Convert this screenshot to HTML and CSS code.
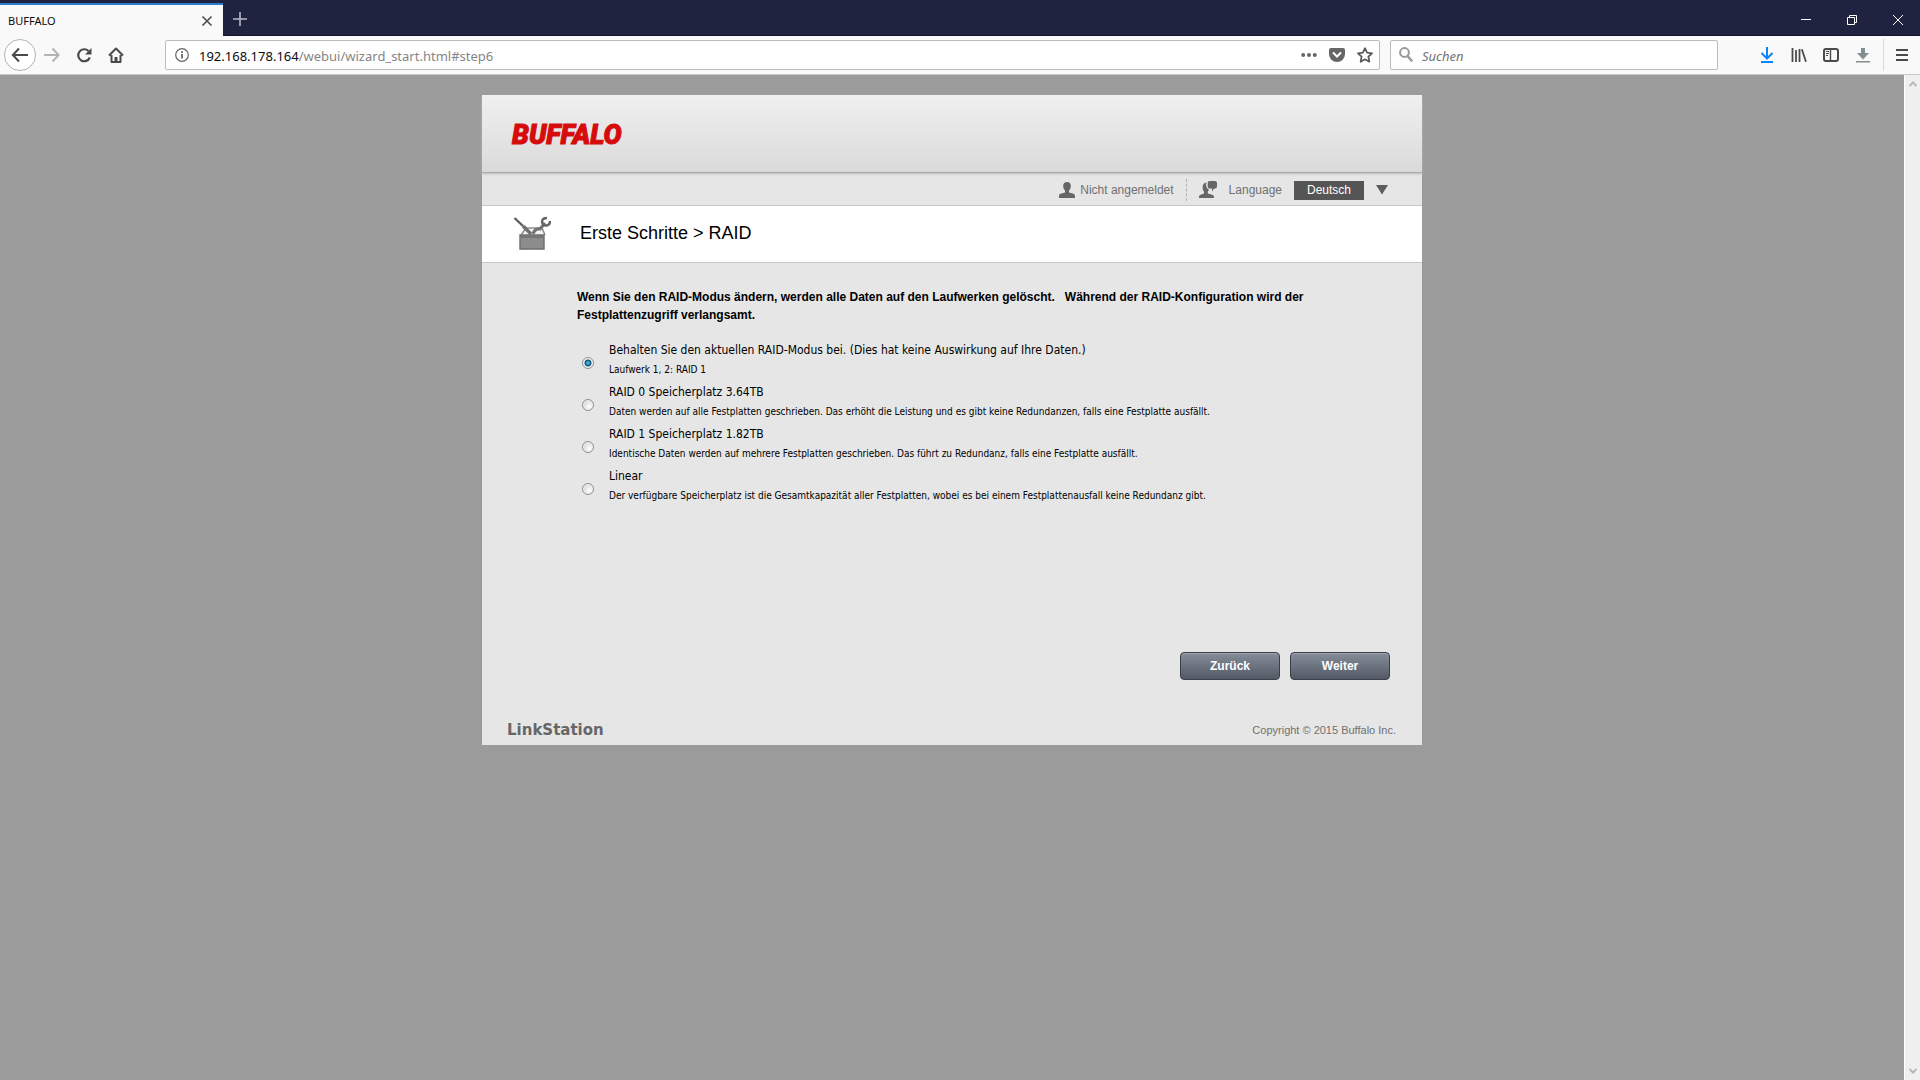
FILE: index.html
```html
<!DOCTYPE html>
<html lang="de">
<head>
<meta charset="utf-8">
<title>BUFFALO</title>
<link rel="stylesheet" href="styles.css">
</head>
<body>
<header class="browser">
  <div class="tabs">
    <div class="tab">
      <span>BUFFALO</span>
      <button class="icon-button" aria-label="Tab schließen"><svg width="12" height="12" viewBox="0 0 12 12" fill="none" stroke="#4c4c4c" stroke-width="1.6"><path d="M1.5 1.5l9 9M10.500 1.500l-9 9"/></svg></button>
    </div>
    <button class="icon-button new-tab" aria-label="Neuer Tab"><svg width="14" height="14" viewBox="0 0 14 14" fill="none" stroke="#b9bac4" stroke-width="1.600"><path d="M7 0v14M0 7h14"/></svg></button>
    <div class="window-buttons">
      <button class="icon-button" aria-label="Minimieren"><svg width="10" height="10" viewBox="0 0 10 10" stroke="#fff"><path d="M0 4.500h10"/></svg></button>
      <button class="icon-button" aria-label="Wiederherstellen"><svg width="10" height="10" viewBox="0 0 10 10" fill="none" stroke="#fff"><path d="M.5 2.500h7v7h-7zM2.500 2.500v-2h7v7h-2"/></svg></button>
      <button class="icon-button" aria-label="Schließen"><svg width="10" height="10" viewBox="0 0 10 10" fill="none" stroke="#fff"><path d="M0 0l10 10M10 0L0 10"/></svg></button>
    </div>
  </div>
  <div class="toolbar">
    <nav class="nav-buttons">
      <button class="icon-button back" aria-label="Zurück"><svg width="18" height="16" viewBox="0 0 18 16" fill="none" stroke="#4a4a4a" stroke-width="2"><path d="M17 8H2M8 1.500L1.800 8 8 14.500"/></svg></button>
      <button class="icon-button" aria-label="Vor"><svg width="16" height="16" viewBox="0 0 16 16" fill="none" stroke="#b4b4b4" stroke-width="2"><path d="M0 8h14M8.500 1.500L14.700 8 8.500 14.500"/></svg></button>
      <button class="icon-button" aria-label="Neu laden"><svg width="16" height="16" viewBox="0 0 16 16" fill="none" stroke="#4a4a4a" stroke-width="2.200"><path d="M13.800 10.500A6 6 0 1 1 12.500 4"/><path d="M15.500 1v6.500H9z" fill="#4a4a4a" stroke="none"/></svg></button>
      <button class="icon-button" aria-label="Startseite"><svg width="16" height="16" viewBox="0 0 16 16" fill="none" stroke="#4a4a4a" stroke-width="2" stroke-linejoin="round"><path d="M1 8.500L8 1.500l7 7M3.500 8v7h9V8"/><path d="M6.500 15v-5h3v5z" fill="#4a4a4a" stroke="none"/></svg></button>
    </nav>
    <div class="address field">
      <svg width="14" height="14" viewBox="0 0 14 14" fill="none" stroke="#666" stroke-width="1.200"><circle cx="7" cy="7" r="6.300"/><path d="M7 6v4.500M7 3.200v1.700" stroke-width="1.800"/></svg>
      <a class="url" href="#step6"><span>192.168.178.164</span>/webui/wizard_start.html#step6</a>
      <button class="icon-button" aria-label="Aktionen"><svg width="16" height="6" viewBox="0 0 16 6" fill="#666"><circle cx="2.200" cy="3" r="2"/><circle cx="8" cy="3" r="2"/><circle cx="13.800" cy="3" r="2"/></svg></button>
      <button class="icon-button" aria-label="Pocket"><svg width="16" height="16" viewBox="0 0 16 16"><path d="M2 1h12q2 0 2 2v4a8 8 0 0 1-16 0V3q0-2 2-2z" fill="#666"/><path d="M4.500 6L8 9.500 11.500 6" fill="none" stroke="#fff" stroke-width="2" stroke-linecap="round"/></svg></button>
      <button class="icon-button" aria-label="Lesezeichen"><svg width="16" height="16" viewBox="0 0 16 16" fill="none" stroke="#5a5a5a" stroke-width="1.800" stroke-linejoin="round"><path d="M8 1.200l2.100 4.500 4.900.6-3.600 3.400.9 5L8 12.300l-4.300 2.400.9-5L1 6.300l4.900-.6z"/></svg></button>
    </div>
    <label class="search field">
      <svg width="14" height="16" viewBox="0 0 14 16" fill="none" stroke="#999" stroke-width="2"><circle cx="5.500" cy="5.500" r="4.400"/><path d="M8.500 9l4.700 5.500" stroke-width="2.400"/></svg>
      <input type="text" placeholder="Suchen" aria-label="Suchen">
    </label>
    <div class="tools">
      <button class="icon-button" aria-label="Downloads"><svg width="14" height="16" viewBox="0 0 14 16" fill="none" stroke="#0a84ff" stroke-width="2"><path d="M7 0v11M1.500 6L7 11.500 12.500 6M1 15h12"/></svg></button>
      <button class="icon-button" aria-label="Bibliothek"><svg width="16" height="16" viewBox="0 0 16 16" fill="none" stroke="#4a4a4a" stroke-width="1.800"><path d="M1.500 1v14M5 3v12M8.500 2v13M10.800 2.200l4.200 12.600"/></svg></button>
      <button class="icon-button" aria-label="Seitenleiste"><svg width="16" height="14" viewBox="0 0 16 14" fill="none" stroke="#4a4a4a"><rect x="1" y="1" width="14" height="12" rx="2" stroke-width="2"/><path d="M7.500 1v12" stroke-width="1.400"/><path d="M3 3.500h3M3 5.500h3M3 7.500h2"/></svg></button>
      <button class="icon-button" aria-label="Herunterladen"><svg width="14" height="16" viewBox="0 0 14 16" fill="#849090"><path d="M5 1h4v5h4l-6 6.500L1 6h4zM0 14h14v1.500H0z"/></svg></button>
    </div>
    <div class="menu">
      <button class="icon-button" aria-label="Menü"><svg width="12" height="14" viewBox="0 0 12 14" fill="#4a4a4a"><path d="M0 1h12v2H0zM0 6h12v2H0zM0 11h12v2H0z"/></svg></button>
    </div>
  </div>
</header>
<div class="viewport">
  <div class="page">
    <div class="card">
      <header class="brand"><span class="logo">BUFFALO</span></header>
      <div class="userbar">
        <span class="user"><svg width="16" height="16" viewBox="0 0 16 16" fill="#666"><path d="M8 0c2.700 0 4 1.800 3.800 4.200C11.700 6.300 11 7.500 10 8.600v1.900l4.500 1.300Q16 12.300 16 14v2H0v-2q0-1.700 1.500-2.200L6 10.500V8.600C5 7.500 4.300 6.300 4.200 4.200 4 1.800 5.300 0 8 0z"/></svg>Nicht angemeldet</span>
        <label class="language"><svg width="18" height="18" viewBox="0 0 18 18" fill="#666"><path d="M10.500 0H16q2 0 2 2v3.500q0 2-2 2h-.8L13 10.500V7.500h-2.500q-1.800 0-1.800-2V2q0-2 1.800-2z"/><path d="M7.500 1.500Q6.900 3 7.200 5q.2 2.400 2.600 3.500-.2 1.500-1 2.200v1.800l4.500 1.200q1.700.6 1.700 2.300v1H0v-1q0-1.700 1.500-2.300L5 12.500v-1.800Q3.600 9 3.600 6.200q0-4 3.900-4.700z"/></svg><span>Language</span>
          <select class="language-select"><option>Deutsch</option></select>
          <svg width="12" height="10" viewBox="0 0 12 10" fill="#5c5c5c"><path d="M0 0h12L6 9.500z"/></svg></label>
      </div>
      <div class="title">
        <svg width="38" height="34" viewBox="0 0 38 34"><path d="M8 19l5-7h16l3 7" fill="#f4f4f4" stroke="#8c8c8c" stroke-width="1.500"/><path d="M1.500 2L10 10" stroke="#5e5e5e" stroke-width="2.400"/><path d="M10 10l8 8" stroke="#707070" stroke-width="3.400"/><path d="M20 18q2-6 7-5l5-6" fill="none" stroke="#747474" stroke-width="3.200"/><path d="M34 2q-5 0-5 4 1 4 4.500 3.500Q37 9 37 5" fill="none" stroke="#666" stroke-width="2.400"/><path d="M7 19h24v14H7z" fill="#8c8c8c" stroke="#6c6c6c" stroke-width="1.400"/><path d="M8 20h22v2H8z" fill="#757575"/></svg>
        <h1>Erste Schritte &gt; RAID</h1>
      </div>
      <main class="content">
        <p class="warning">Wenn Sie den RAID-Modus ändern, werden alle Daten auf den Laufwerken gelöscht. &nbsp; Während der RAID-Konfiguration wird der Festplattenzugriff verlangsamt.</p>
        <form class="options">
          <div class="option"><input type="radio" name="raid" id="keep" checked><label for="keep">Behalten Sie den aktuellen RAID-Modus bei. (Dies hat keine Auswirkung auf Ihre Daten.)<small>Laufwerk 1, 2: RAID 1</small></label></div>
          <div class="option"><input type="radio" name="raid" id="raid0"><label for="raid0">RAID 0 Speicherplatz 3.64TB<small>Daten werden auf alle Festplatten geschrieben. Das erhöht die Leistung und es gibt keine Redundanzen, falls eine Festplatte ausfällt.</small></label></div>
          <div class="option"><input type="radio" name="raid" id="raid1"><label for="raid1">RAID 1 Speicherplatz 1.82TB<small>Identische Daten werden auf mehrere Festplatten geschrieben. Das führt zu Redundanz, falls eine Festplatte ausfällt.</small></label></div>
          <div class="option"><input type="radio" name="raid" id="linear"><label for="linear">Linear<small>Der verfügbare Speicherplatz ist die Gesamtkapazität aller Festplatten, wobei es bei einem Festplattenausfall keine Redundanz gibt.</small></label></div>
        </form>
      </main>
      <div class="actions">
        <button class="action">Zurück</button>
        <button class="action">Weiter</button>
      </div>
      <footer class="footer"><span class="product">LinkStation</span><span>Copyright © 2015 Buffalo Inc.</span></footer>
    </div>
  </div>
  <div class="scrollbar">
    <svg width="10" height="6" viewBox="0 0 10 6" fill="none" stroke="#b8b8b8" stroke-width="2"><path d="M1.500 5L5 1.500 8.500 5"/></svg>
    <svg width="10" height="6" viewBox="0 0 10 6" fill="none" stroke="#b8b8b8" stroke-width="2"><path d="M1.500 1L5 4.500 8.500 1"/></svg>
  </div>
</div>
</body>
</html>
```
FILE: styles.css
```css
* {
  box-sizing: border-box;
}

body {
  margin: 0;
  min-height: 100vh;
  display: flex;
  flex-direction: column;
  font-family: "Liberation Sans", Arial, sans-serif;
  font-size: 12px;
}

svg {
  flex: none;
  display: block;
}

.icon-button {
  display: flex;
  align-items: center;
  justify-content: center;
  padding: 0;
  border: 0;
  background: none;
}

/* Browser window */
.browser {
  font-family: "Noto Sans", sans-serif;
}

.tabs {
  display: flex;
  align-items: center;
  height: 36px;
  background: #20233f;
  box-shadow: inset 0 -1px #14162c;
}

.tab {
  display: flex;
  align-items: center;
  justify-content: space-between;
  align-self: flex-end;
  width: 223px;
  height: 33px;
  padding: 0 10px 0 8px;
  border-top: 2px solid #2b7cd0;
  background: #f9f9fa;
  color: #0c0c0d;
  font-size: 11px;
}

.new-tab {
  margin: 2px 0 0 10px;
}

.window-buttons {
  display: flex;
  gap: 36px;
  margin: 3px 17px 0 auto;
}

.toolbar {
  display: flex;
  align-items: center;
  height: 39px;
  padding-left: 4px;
  border-bottom: 1px solid #c8c8c8;
  background: #f9f9fa;
}

.nav-buttons {
  display: flex;
  align-items: center;
  gap: 16px;
  width: 161px;
}

.back {
  width: 32px;
  height: 32px;
  margin-right: -8px;
  border: 1px solid #b4b4b4;
  border-radius: 50%;
  background: #fff;
}

.field {
  display: flex;
  align-items: center;
  height: 30px;
  border: 1px solid #bcbcbc;
  border-radius: 2px;
  background: #fff;
}

.address {
  flex: 1;
  gap: 12px;
  padding: 0 6px 0 9px;
}

.url {
  flex: 1;
  margin-left: -2px;
  padding-top: 2px;
  color: #858585;
  font-size: 13px;
  text-decoration: none;
}

.url span {
  color: #0c0c0d;
}

.search {
  width: 328px;
  margin-left: 10px;
  gap: 9px;
  padding-left: 8px;
}

.search input {
  flex: 1;
  min-width: 0;
  padding: 2px 0 0;
  border: 0;
  outline: 0;
  background: none;
  font: italic 13px "Noto Sans", sans-serif;
}

.search input::placeholder {
  color: #737373;
}

.tools {
  display: flex;
  align-items: center;
  justify-content: space-between;
  width: 110px;
  margin: 0 13px 0 42px;
}

.menu {
  display: flex;
  align-items: center;
  height: 32px;
  padding: 0 12px;
  border-left: 1px solid #d8d8d9;
}

/* Page area */
.viewport {
  flex: 1;
  display: flex;
  background: #9b9b9b;
}

.page {
  flex: 1;
  padding: 20px 16px;
}

.scrollbar {
  display: flex;
  flex-direction: column;
  align-items: center;
  justify-content: space-between;
  width: 16px;
  padding: 6px 0;
  border-left: 1px solid #fff;
  background: #f0f0f0;
}

.card {
  max-width: 940px;
  margin: 0 auto;
  background: #e6e6e6;
}

.brand {
  display: flex;
  align-items: center;
  height: 78px;
  padding: 3px 30px 0;
  border-bottom: 1px solid #a8a8a8;
  background: linear-gradient(#f0f0f0, #dadada);
  box-shadow: 0 1px 2px #bbb;
}

.logo {
  color: #d60c0c;
  font: italic 900 27px Roboto, "Liberation Sans", sans-serif;
  -webkit-text-stroke: 1px #d60c0c;
}

.userbar {
  display: flex;
  align-items: center;
  justify-content: flex-end;
  height: 33px;
  padding: 2px 34px 0 0;
  border-bottom: 1px solid #c6c6c6;
  color: #707070;
}

.user {
  display: flex;
  align-items: center;
  gap: 5px;
  height: 22px;
  padding-right: 12px;
  border-right: 1px dashed #b4b4b4;
}

.language {
  display: flex;
  align-items: center;
  gap: 12px;
  padding-left: 12px;
}

.language-select {
  width: 70px;
  height: 19px;
  padding: 0;
  border: 0;
  appearance: none;
  background: #555;
  color: #fff;
  font: 12px "Liberation Sans", Arial, sans-serif;
  text-align: center;
  text-align-last: center;
}

.title {
  display: flex;
  align-items: center;
  gap: 29px;
  height: 57px;
  padding: 0 31px 2px;
  border-bottom: 1px solid #c6c6c6;
  background: #fff;
}

.title h1 {
  margin: 0;
  font-size: 18px;
  font-weight: normal;
}

.content {
  padding: 25px 90px 0 95px;
}

.warning {
  margin: 0 0 16px;
  font-weight: bold;
  line-height: 18px;
}

.options {
  display: grid;
  gap: 2px;
  font-family: "DejaVu Sans Condensed", "DejaVu Sans", sans-serif;
  line-height: 20px;
}

.option {
  display: flex;
  align-items: center;
  gap: 15px;
}

.option input {
  appearance: none;
  flex: none;
  width: 12px;
  height: 12px;
  margin: 6px 0 0 5px;
  border: 1px solid #8e8f8f;
  border-radius: 50%;
  background: radial-gradient(circle at 65% 65%, #fff, #c4c8cc);
  box-shadow: inset 0 0 0 1px #f4f4f4;
}

.option input:checked {
  background: radial-gradient(circle, #3fb0dc 0 1px, #0e4a70 3px, #e8ecef 4px);
}

.option small {
  display: block;
  font-size: 10px;
}

.actions {
  display: flex;
  justify-content: flex-end;
  gap: 10px;
  padding: 146px 32px 0;
}

.action {
  width: 100px;
  height: 28px;
  padding: 0;
  border: 1px solid #3a3f47;
  border-radius: 4px;
  background: linear-gradient(#858d98, #535a66);
  box-shadow: inset 0 1px #a0a6ae;
  color: #fff;
  font: bold 12px "Liberation Sans", Arial, sans-serif;
}

.footer {
  display: flex;
  align-items: center;
  justify-content: space-between;
  padding: 40px 26px 5px 25px;
  color: #707070;
  font-size: 11px;
  line-height: 20px;
}

.product {
  color: #666;
  font: bold 15px/20px "DejaVu Sans", sans-serif;
}
```
